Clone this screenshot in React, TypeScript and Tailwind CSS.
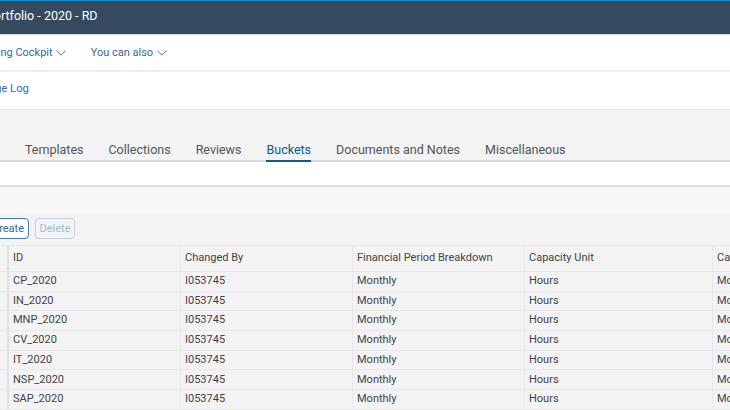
const rows = ['CP_2020', 'IN_2020', 'MNP_2020', 'CV_2020', 'IT_2020', 'NSP_2020', 'SAP_2020']
const tabs = ['Templates', 'Collections', 'Reviews', 'Buckets', 'Documents and Notes', 'Miscellaneous']

function Cell({ width, children }: { width: string; children?: React.ReactNode }) {
  return <div className={`flex h-full shrink-0 items-center border-r border-[#e8e8e8] pl-[4px] ${width}`}>{children}</div>
}

function Chevron() {
  return (
    <svg width="10" height="6" viewBox="0 0 10 6" fill="none" stroke="#34699e" strokeWidth="0.9">
      <path d="M0.4 0.6 L5 5.2 L9.6 0.6" />
    </svg>
  )
}

export default function App() {
  return (
    <div className="flex h-[410px] w-[730px] flex-col overflow-hidden bg-[#f3f3f3] font-['Roboto',sans-serif] text-[11px] text-[#3f4347]">
      {/* --- shell bar --- */}
      <div className="flex h-[35px] shrink-0 items-center overflow-hidden whitespace-nowrap border-t-[1.5px] border-b border-t-[#0a8fd0] border-b-[#d5dadd] bg-[#354a5f] pb-[3px] text-[12.5px] text-white">
        <span className="-ml-[14px]">Portfolio - 2020 - RD</span>
      </div>

      {/* --- menu --- */}
      <div className="flex h-[37px] shrink-0 items-center overflow-hidden whitespace-nowrap border-b-2 border-[#eeeeee] bg-white pt-[1px] text-[11px] text-[#34699e]">
        <span className="-ml-[30px] flex items-center gap-[3px]">
          Planning Cockpit <Chevron />
        </span>
        <span className="ml-[25px] flex items-center gap-[4px]">
          You can also <Chevron />
        </span>
      </div>

      <div className="flex h-[38px] shrink-0 items-center overflow-hidden whitespace-nowrap border-b border-[#e5e5e5] bg-white pb-[2px] text-[11.3px] text-[#2f6fc0]">
        <span className="-ml-[31px]">Change Log</span>
      </div>

      {/* --- tabs --- */}
      <div className="flex h-[52px] shrink-0 items-end gap-[25px] border-b-2 border-[#d9d9d9] bg-[#f3f3f3] pl-[25px] text-[12.5px]">
        {tabs.map((t) => (
          <div
            key={t}
            className={
              t === 'Buckets'
                ? '-mb-[2px] flex h-[21px] items-start border-b-2 border-[#0a5a9c] text-[#0a5a9c]'
                : 'flex h-[19px] items-start text-[#515559]'
            }
          >
            {t}
          </div>
        ))}
      </div>

      <div className="h-[25px] shrink-0 border-b-2 border-[#dcdcdc] bg-white" />
      <div className="h-[26px] shrink-0 bg-[#f7f7f7]" />

      {/* --- toolbar --- */}
      <div className="flex h-[32px] shrink-0 items-start gap-[6px] overflow-hidden pt-[5px]">
        <button className="-ml-[13px] flex h-[21px] items-center rounded-[4px] border border-[#3f7cb5] bg-white px-[4px] pt-[2px] text-[#34699e]">
          Create
        </button>
        <button disabled className="flex h-[21px] items-center rounded-[4px] border border-[#bfd3e6] px-[3.5px] pt-[2px] text-[#a3bcd6]">
          Delete
        </button>
      </div>

      {/* --- table --- */}
      <div className="flex flex-1 flex-col overflow-hidden whitespace-nowrap border-t border-[#e5e5e5]">
        <div className="flex h-[26px] shrink-0 border-b border-[#e8e8e8]">
          <div className="ml-[7px] h-full w-[2px] shrink-0 bg-[#e0e0e0]" />
          <Cell width="w-[172px]">ID</Cell>
          <Cell width="w-[172px]">Changed By</Cell>
          <Cell width="w-[172px]">Financial Period Breakdown</Cell>
          <Cell width="w-[188px]">Capacity Unit</Cell>
          <div className="flex items-center pl-[4px]">Capacity</div>
        </div>
        {rows.map((r) => (
          <div key={r} className="flex h-[19.7px] shrink-0 border-b border-[#e8e8e8]">
            <div className="ml-[7px] h-full w-[2px] shrink-0 bg-[#e0e0e0]" />
            <Cell width="w-[172px]">{r}</Cell>
            <Cell width="w-[172px]">I053745</Cell>
            <Cell width="w-[172px]">Monthly</Cell>
            <Cell width="w-[188px]">Hours</Cell>
            <div className="flex items-center pl-[4px]">Monthly</div>
          </div>
        ))}
      </div>
    </div>
  )
}
